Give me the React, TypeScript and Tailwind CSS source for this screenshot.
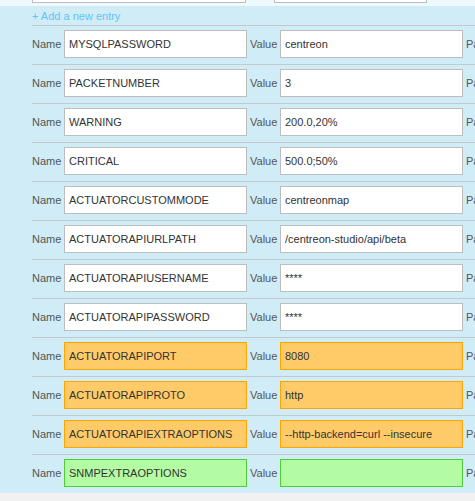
const rows: Array<{ name: string; value: string; tone?: "warn" | "new" }> = [
  { name: "MYSQLPASSWORD", value: "centreon" },
  { name: "PACKETNUMBER", value: "3" },
  { name: "WARNING", value: "200.0,20%" },
  { name: "CRITICAL", value: "500.0;50%" },
  { name: "ACTUATORCUSTOMMODE", value: "centreonmap" },
  { name: "ACTUATORAPIURLPATH", value: "/centreon-studio/api/beta" },
  { name: "ACTUATORAPIUSERNAME", value: "****" },
  { name: "ACTUATORAPIPASSWORD", value: "****" },
  { name: "ACTUATORAPIPORT", value: "8080", tone: "warn" },
  { name: "ACTUATORAPIPROTO", value: "http", tone: "warn" },
  { name: "ACTUATORAPIEXTRAOPTIONS", value: "--http-backend=curl --insecure", tone: "warn" },
  { name: "SNMPEXTRAOPTIONS", value: "", tone: "new" }
];

function fieldClass(tone?: "warn" | "new") {
  if (tone === "warn") return "border-[#ffa500] bg-[#ffcb69]";
  if (tone === "new") return "border-[#4fcf37] bg-[#b3fca4]";
  return "border-[#bdbdbd] bg-white";
}

function Field({ text, tone }: { text: string; tone?: "warn" | "new" }) {
  return (
    <div
      className={`flex h-[28px] w-[183px] shrink-0 items-center border px-[4px] text-[11px] whitespace-nowrap text-[#333] ${fieldClass(tone)}`}
    >
      {text}
    </div>
  );
}

export default function App() {
  return (
    <div
      className="h-[501px] w-[475px] overflow-hidden bg-[#f1f1f1]"
      style={{ fontFamily: '"Liberation Sans", Arial, sans-serif' }}
    >
      <div className="flex h-[6px] bg-[#edf9fd] pl-[32px]">
        <div className="h-[3px] w-[214px] border-x border-b border-[#bdbdbd] bg-white" />
        <div className="ml-[28px] h-[3px] w-[153px] border-x border-b border-[#bdbdbd] bg-white" />
      </div>

      <div className="bg-[#d0ecf7] pl-[32px]">
        <div className="flex h-[19px] items-center pt-[2px] text-[11px] text-[#62c4f2]">+ Add a new entry</div>

        {rows.map((row) => (
          <div key={row.name} className="flex items-center border-t border-[#c6c9cb] pt-[4px] pb-[6px] text-[11px] text-[#555]">
            <span className="w-[32px] shrink-0">Name</span>
            <Field text={row.name} tone={row.tone} />
            <span className="ml-[3px] w-[30px] shrink-0">Value</span>
            <Field text={row.value} tone={row.tone} />
            <span className="ml-[3px] whitespace-nowrap">Password</span>
          </div>
        ))}
      </div>
    </div>
  );
}
